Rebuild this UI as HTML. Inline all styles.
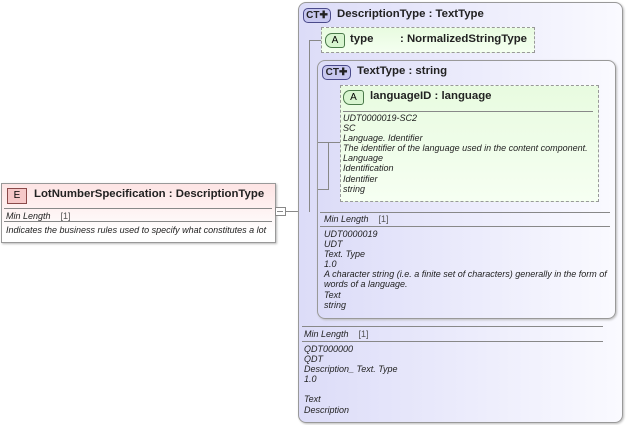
<!DOCTYPE html>
<html><head><style>
body{margin:0;width:627px;height:425px;background:#fff;position:relative;overflow:hidden;font-family:"Liberation Sans",sans-serif;}
.a{position:absolute;}
.t{position:absolute;font-size:9px;font-style:italic;color:#222;white-space:nowrap;line-height:10.1px;}
.b{position:absolute;font-size:11.4px;font-weight:bold;color:#222;white-space:nowrap;line-height:13px;}
.hl{position:absolute;height:1px;background:#888;}
.badge{position:absolute;font-size:10px;text-align:center;line-height:13px;border:1px solid #555;}
.ct{background:#c8c8f0;border-radius:5px;border-color:#4a4a8a;color:#222;font-weight:bold;}
.ab{background:#d8f5d0;border-radius:7px 3px 3px 7px;border-color:#4a7a4a;}
</style></head><body>
<!-- element box -->
<div class="a" style="left:1px;top:183px;width:273px;height:58px;border:1px solid #999;background:linear-gradient(#fde4e4,#fff 85%);box-shadow:1px 1px 2px #bbb;"></div>
<div class="badge" style="left:7px;top:188px;width:18px;height:14px;background:#f6c8c8;border-color:#8a4a4a;">E</div>
<div class="b" style="left:34px;top:188px;">LotNumberSpecification : DescriptionType</div>
<div class="hl" style="left:4px;top:208px;width:268px;"></div>
<div class="t" style="left:6px;top:211px;">Min Length &nbsp;&nbsp;&nbsp;<span style="font-style:normal;color:#555">[1]</span></div>
<div class="hl" style="left:4px;top:221px;width:268px;"></div>
<div class="t" style="left:6px;top:225px;">Indicates the business rules used to specify what constitutes a lot</div>
<div class="a" style="left:275px;top:207px;width:9px;height:7px;border:1px solid #888;background:#fff;"></div>
<div class="hl" style="left:277px;top:211px;width:6px;"></div>
<div class="hl" style="left:285px;top:211px;width:13px;"></div>
<!-- outer CT -->
<div class="a" style="left:298px;top:2px;width:323px;height:419px;border:1px solid #999;border-radius:8px;background:linear-gradient(90deg,#dcdcf8,#fafaff);box-shadow:1px 1px 2px #bbb;"></div>
<div class="badge ct" style="left:303px;top:8px;width:26px;height:13px;">CT✚</div>
<div class="b" style="left:337px;top:8px;">DescriptionType : TextType</div>
<div class="a" style="left:309px;top:40px;width:1px;height:172px;background:#888;"></div>
<div class="hl" style="left:309px;top:40px;width:12px;"></div>
<!-- type attr -->
<div class="a" style="left:321px;top:27px;width:212px;height:24px;border:1px dashed #999;background:linear-gradient(#e8fbe0,#f4fff0);"></div>
<div class="badge ab" style="left:325px;top:33px;width:18px;height:13px;">A</div>
<div class="b" style="left:350px;top:33px;">type</div>
<div class="b" style="left:400px;top:33px;">: NormalizedStringType</div>
<!-- inner TextType -->
<div class="a" style="left:317px;top:60px;width:297px;height:257px;border:1px solid #999;border-radius:8px;background:linear-gradient(90deg,#dcdcf8,#fafaff);box-shadow:1px 1px 2px #bbb;"></div>
<div class="badge ct" style="left:322px;top:65px;width:27px;height:13px;">CT✚</div>
<div class="b" style="left:357px;top:65px;">TextType : string</div>
<div class="a" style="left:328px;top:142px;width:1px;height:47px;background:#888;"></div>
<div class="hl" style="left:318px;top:142px;width:22px;"></div>
<div class="hl" style="left:318px;top:189px;width:11px;"></div>
<!-- languageID -->
<div class="a" style="left:340px;top:85px;width:257px;height:115px;border:1px dashed #999;background:linear-gradient(#e8fbe0,#f6fff2);"></div>
<div class="badge ab" style="left:343px;top:90px;width:19px;height:13px;">A</div>
<div class="b" style="left:370px;top:90px;">languageID : language</div>
<div class="hl" style="left:343px;top:111px;width:250px;"></div>
<div class="t" style="left:343px;top:113px;">UDT0000019-SC2<br>SC<br>Language. Identifier<br>The identifier of the language used in the content component.<br>Language<br>Identification<br>Identifier<br>string</div>
<div class="hl" style="left:320px;top:212px;width:290px;"></div>
<div class="t" style="left:324px;top:214px;">Min Length &nbsp;&nbsp;&nbsp;<span style="font-style:normal;color:#555">[1]</span></div>
<div class="hl" style="left:320px;top:226px;width:290px;"></div>
<div class="t" style="left:324px;top:229px;">UDT0000019<br>UDT<br>Text. Type<br>1.0<br>A character string (i.e. a finite set of characters) generally in the form of<br>words of a language.<br>Text<br>string</div>
<!-- outer info -->
<div class="hl" style="left:302px;top:326px;width:301px;"></div>
<div class="t" style="left:304px;top:329px;">Min Length &nbsp;&nbsp;&nbsp;<span style="font-style:normal;color:#555">[1]</span></div>
<div class="hl" style="left:302px;top:341px;width:301px;"></div>
<div class="t" style="left:304px;top:344px;">QDT000000<br>QDT<br>Description_ Text. Type<br>1.0<br>&nbsp;<br>Text<br>Description</div>
</body></html>
